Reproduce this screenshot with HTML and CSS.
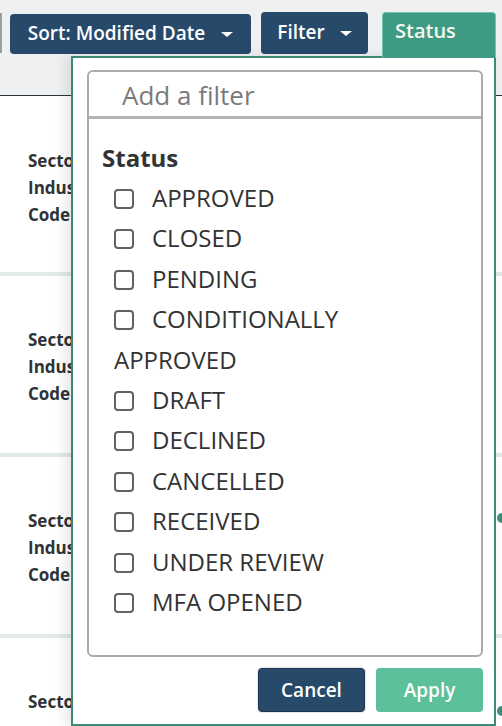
FILE: index.html
```html
<!DOCTYPE html>
<html lang="en">
<head>
<meta charset="utf-8">
<title>Filter by status</title>
<link rel="stylesheet" href="styles.css">
</head>
<body>
<div class="page">
  <header class="toolbar">
    <div class="edge"></div>
    <button class="tbtn sort">Sort: Modified Date <span class="caret"></span></button>
    <button class="tbtn filter">Filter <span class="caret"></span></button>
    <button class="tbtn status">Status</button>
  </header>

  <main class="cards">
    <section class="card first">
      <div class="meta"><div>Sector:</div><div>Industry:</div><div>Code:</div></div>
    </section>
    <section class="card">
      <div class="meta"><div>Sector:</div><div>Industry:</div><div>Code:</div></div>
    </section>
    <section class="card">
      <div class="meta"><div>Sector:</div><div>Industry:</div><div>Code:</div></div>
      <span class="dot dot-a"></span>
    </section>
    <section class="card last">
      <div class="meta"><div>Sector:</div></div>
      <span class="dot dot-b"></span>
    </section>
  </main>

  <div class="dropdown">
    <div class="box">
      <input class="search" type="text" placeholder="Add a filter">
      <div class="list">
        <div class="group">Status</div>
        <label class="item"><input type="checkbox"><span>APPROVED</span></label>
        <label class="item"><input type="checkbox"><span>CLOSED</span></label>
        <label class="item"><input type="checkbox"><span>PENDING</span></label>
        <label class="item"><input type="checkbox"><span>CONDITIONALLY APPROVED</span></label>
        <label class="item"><input type="checkbox"><span>DRAFT</span></label>
        <label class="item"><input type="checkbox"><span>DECLINED</span></label>
        <label class="item"><input type="checkbox"><span>CANCELLED</span></label>
        <label class="item"><input type="checkbox"><span>RECEIVED</span></label>
        <label class="item"><input type="checkbox"><span>UNDER REVIEW</span></label>
        <label class="item"><input type="checkbox"><span>MFA OPENED</span></label>
      </div>
    </div>
    <div class="actions">
      <button class="abtn cancel">Cancel</button>
      <button class="abtn apply">Apply</button>
    </div>
  </div>
</div>
</body>
</html>
```

FILE: styles.css
```css
* { box-sizing: border-box; }
html, body { margin: 0; padding: 0; }
body {
  font-family: "Open Sans", "Liberation Sans", sans-serif;
  background: #ffffff;
  color: #333;
  width: 502px;
  height: 726px;
  overflow: hidden;
}
.page { position: relative; width: 502px; height: 726px; overflow: hidden; }

.toolbar {
  height: 96px;
  background: #eff0f1;
  border-bottom: 1px solid #2e3338;
  display: flex;
  align-items: flex-start;
  position: relative;
}
.edge {
  width: 2px;
  height: 40px;
  margin-top: 13px;
  background: #9a9ea3;
}
.tbtn {
  font-family: inherit;
  border: 0;
  color: #fff;
  font-weight: 600;
  font-size: 19px;
  display: flex;
  align-items: center;
  justify-content: center;
  cursor: pointer;
}
.sort {
  margin-left: 8px;
  margin-top: 14px;
  width: 241px;
  height: 40px;
  background: #27496a;
  border-radius: 4px;
  padding: 0 0 2px 0;
  gap: 16px;
}
.filter {
  margin-left: 10px;
  margin-top: 12px;
  width: 107px;
  height: 42px;
  background: #27496a;
  border-radius: 4px;
  padding: 0 0 2px 0;
  gap: 15px;
}
.caret {
  width: 0;
  height: 0;
  border-left: 6px solid transparent;
  border-right: 6px solid transparent;
  border-top: 5px solid #fff;
  margin-top: 3px;
}
.status {
  margin-left: 14px;
  margin-top: 12px;
  width: 114px;
  height: 46px;
  background: #3e9b83;
  border: 1px solid #73c3ad;
  border-bottom: 0;
  border-radius: 4px 4px 0 0;
  font-size: 20px;
  font-weight: 600;
  color: #f7f7ee;
  justify-content: flex-start;
  align-items: flex-start;
  padding: 4px 0 0 12px;
  position: relative;
  z-index: 3;
}

.cards { height: 630px; overflow: hidden; }
.card {
  height: 181px;
  border-bottom: 4px solid #e3e8e9;
  padding: 50px 0 0 28px;
  display: flex;
  justify-content: space-between;
  position: relative;
}
.card.first { height: 180px; padding-top: 51px; }
.card.last { height: 84px; border-bottom: 0; }
.meta {
  font-size: 17px;
  font-weight: 700;
  line-height: 27px;
  color: #2f3337;
}
.dot {
  width: 10px;
  height: 10px;
  border-radius: 50%;
  background: #3b8f79;
  margin-right: -5px;
}
.dot-a { margin-top: 6px; }
.dot-b { margin-top: 18px; }

.dropdown {
  position: absolute;
  left: 71px;
  top: 56px;
  width: 425px;
  height: 670px;
  background: #fff;
  border: 2px solid #3a8a75;
  box-shadow: -5px 0 12px rgba(0, 0, 0, 0.10);
  padding: 12px 11px 0 14px;
  z-index: 2;
  display: flex;
  flex-direction: column;
}
.box {
  height: 587px;
  border: 2px solid #ababab;
  border-radius: 6px;
  display: flex;
  flex-direction: column;
}
.search {
  height: 47px;
  border: 0;
  border-bottom: 3px solid #b3b3b3;
  border-radius: 5px 5px 0 0;
  font-family: inherit;
  font-size: 26px;
  padding: 2px 0 0 33px;
  color: #333;
  outline: none;
  flex: none;
}
.search::placeholder { color: #7a7a7a; }
.list {
  padding: 19px 30px 0 13px;
  flex: 1;
}
.group {
  font-size: 24px;
  font-weight: 700;
  line-height: 40px;
  color: #333;
}
.item {
  display: block;
  margin-left: 12px;
  font-size: 24px;
  line-height: 40.4px;
  color: #333;
}
.item input {
  appearance: none;
  -webkit-appearance: none;
  width: 20px;
  height: 20px;
  border: 2px solid #626262;
  border-radius: 4px;
  margin: 0 18px 0 0;
  vertical-align: -2px;
  background: #fff;
}
.actions {
  display: flex;
  justify-content: flex-end;
  gap: 11px;
  margin-top: 11px;
}
.abtn {
  width: 107px;
  height: 44px;
  border-radius: 4px;
  font-family: inherit;
  font-size: 19px;
  font-weight: 600;
  color: #fff;
  border: 0;
  cursor: pointer;
}
.cancel {
  background: #274a6b;
  border: 1px solid #1b3650;
  box-shadow: 0 0 2px rgba(0,0,0,0.35);
}
.apply {
  background: #5cc09b;
}
```
